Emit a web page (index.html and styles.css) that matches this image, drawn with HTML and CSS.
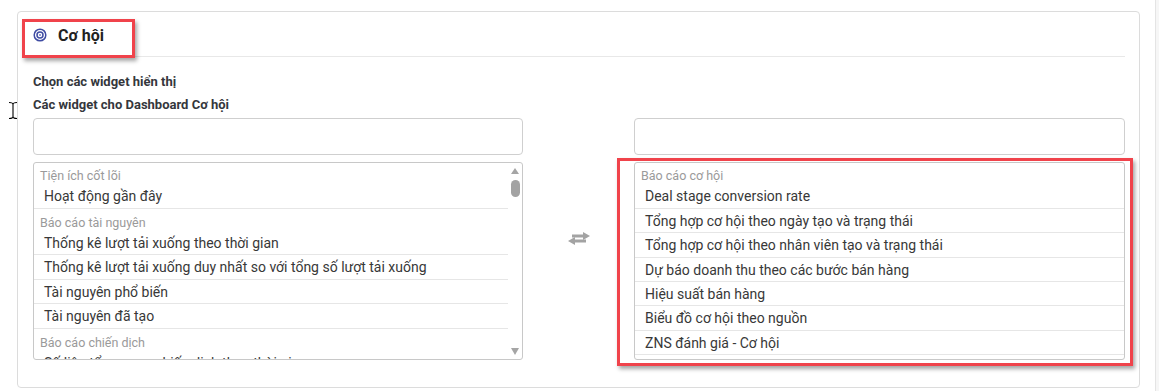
FILE: index.html
```html
<!DOCTYPE html>
<html lang="vi">
<head>
  <meta charset="UTF-8" />
  <meta name="viewport" content="width=device-width, initial-scale=1.0"/>
  <title>Dashboard Cơ hội</title>
  <link rel="stylesheet" href="styles.css">
</head>
<body>

<div class="page">
  <div class="card">
    <div class="card-head">
      <svg class="head-icon" width="14" height="14" viewBox="0 0 14 14">
        <circle cx="7" cy="7" r="5.8" fill="none" stroke="#3f4ca3" stroke-width="1.5"/>
        <circle cx="7" cy="7" r="3" fill="none" stroke="#3f4ca3" stroke-width="1.5"/>
        <circle cx="7" cy="7" r="1.1" fill="#7d88c8"/>
      </svg>
      <span class="head-title">Cơ hội</span>
    </div>

    <div class="card-body">
      <div class="lbl">Chọn các widget hiển thị</div>
      <div class="lbl">Các widget cho Dashboard Cơ hội</div>

      <div class="picker">
        <!-- available widgets -->
        <div class="side">
          <div class="search"></div>
          <div class="listbox">
            <div class="items">
              <div class="grp">Tiện ích cốt lõi</div>
              <div class="item">Hoạt động gần đây</div>
              <div class="grp">Báo cáo tài nguyên</div>
              <div class="item">Thống kê lượt tải xuống theo thời gian</div>
              <div class="item">Thống kê lượt tải xuống duy nhất so với tổng số lượt tải xuống</div>
              <div class="item">Tài nguyên phổ biến</div>
              <div class="item">Tài nguyên đã tạo</div>
              <div class="grp">Báo cáo chiến dịch</div>
              <div class="item">Số liệu tổng quan chiến dịch theo thời gian</div>
            </div>
            <div class="vscroll">
              <span class="arr-up"></span>
              <span class="thumb"></span>
              <span class="track"></span>
              <span class="arr-down"></span>
            </div>
          </div>
        </div>

        <div class="mid">
          <svg width="22" height="14" viewBox="0 0 22 14">
            <path d="M4 2.5 H15 V0 L22 4 L15 8 V5.5 H4 Z" fill="#a3a3a3"/>
            <path d="M18 7.5 H7 V5 L0 9 L7 13 V10.5 H18 Z" fill="#a3a3a3"/>
          </svg>
        </div>

        <!-- selected widgets -->
        <div class="side">
          <div class="search"></div>
          <div class="listbox">
            <div class="items">
              <div class="grp">Báo cáo cơ hội</div>
              <div class="item">Deal stage conversion rate</div>
              <div class="item">Tổng hợp cơ hội theo ngày tạo và trạng thái</div>
              <div class="item">Tổng hợp cơ hội theo nhân viên tạo và trạng thái</div>
              <div class="item">Dự báo doanh thu theo các bước bán hàng</div>
              <div class="item">Hiệu suất bán hàng</div>
              <div class="item">Biểu đồ cơ hội theo nguồn</div>
              <div class="item">ZNS đánh giá - Cơ hội</div>
            </div>
          </div>
        </div>
      </div>
    </div>
  </div>

  <!-- annotation boxes -->
  <div class="mark mark-head"></div>
  <div class="mark mark-list"></div>

  <svg class="cursor" width="10" height="19" viewBox="0 0 10 19">
    <path d="M1 1.5 Q5 1.5 5 3.5 Q5 1.5 9 1.5 M5 3.5 V15.5 M1 17.5 Q5 17.5 5 15.5 Q5 17.5 9 17.5" fill="none" stroke="#fff" stroke-width="2.6"/>
    <path d="M1 1.5 Q5 1.5 5 3.5 Q5 1.5 9 1.5 M5 3.5 V15.5 M1 17.5 Q5 17.5 5 15.5 Q5 17.5 9 17.5" fill="none" stroke="#000" stroke-width="1.1"/>
  </svg>
</div>

</body>
</html>
```

FILE: styles.css
```css
* {
  box-sizing: border-box;
}
body {
  margin: 0;
  background: #f6f6f6;
  font-family: Roboto, "Noto Sans", Arial, sans-serif;
  color: #333;
}
.page {
  position: relative;
  width: 1156px;
  height: 391px;
  background: #fff;
  border-right: 1px solid #e4e4e4;
  padding: 11px 0 0 17px;
  overflow: hidden;
}
.card {
  width: 1123px;
  height: 377px;
  border: 1px solid #dcdcdc;
  border-radius: 4px;
}
.card-head {
  display: flex;
  align-items: center;
  gap: 11px;
  height: 45px;
  padding-top: 2px;
  margin: 0 14px 0 15px;
  border-bottom: 1px solid #e8e8e8;
}
.head-icon {
  display: block;
}
.head-title {
  font-size: 16px;
  font-weight: 700;
  color: #222;
}
.card-body {
  padding: 17px 14px 0 15px;
}
.lbl {
  font-size: 13px;
  font-weight: 700;
  line-height: 16px;
  color: #34373c;
  margin-bottom: 7px;
}
.lbl + .lbl {
  margin-bottom: 5px;
}
.picker {
  display: grid;
  grid-template-columns: 490px 111px 491px;
}
.side {
  display: flex;
  flex-direction: column;
  gap: 7px;
}
.search {
  height: 37px;
  border: 1px solid #cfcfcf;
  border-radius: 4px;
  background: #fff;
}
.listbox {
  height: 198px;
  border: 1px solid #c8c8c8;
  border-radius: 3px;
  display: flex;
  overflow: hidden;
}
.items {
  flex: 1;
  min-width: 0;
  overflow: hidden;
}
.grp {
  font-size: 12.5px;
  line-height: 14px;
  color: #9a9a9a;
  padding: 7px 6px 1.3px;
}
.grp:first-child {
  padding-top: 6px;
}
.item {
  font-size: 14px;
  line-height: 17.4px;
  padding: 4px 10px 2px;
  border-bottom: 1px solid #e6e6e6;
  color: #383838;
  white-space: nowrap;
}
.vscroll {
  width: 14px;
  display: flex;
  flex-direction: column;
  align-items: center;
  padding: 5px 0 4px;
}
.arr-up {
  width: 0;
  height: 0;
  border-left: 4.5px solid transparent;
  border-right: 4.5px solid transparent;
  border-bottom: 6px solid #a5a5a5;
}
.thumb {
  width: 9px;
  height: 17px;
  margin-top: 6px;
  border-radius: 5px;
  background: #a3a3a3;
}
.track {
  flex: 1;
}
.arr-down {
  width: 0;
  height: 0;
  border-left: 4.5px solid transparent;
  border-right: 4.5px solid transparent;
  border-top: 7px solid #a5a5a5;
}
.mid {
  display: flex;
  align-items: center;
  justify-content: center;
}
.mark {
  position: absolute;
  border: 3px solid #f0434b;
  box-shadow: 2px 3px 4px rgba(0, 0, 0, 0.35);
}
.mark-head {
  left: 22px;
  top: 19px;
  width: 113px;
  height: 39px;
}
.mark-list {
  left: 617px;
  top: 158px;
  width: 516px;
  height: 208px;
}
.cursor {
  position: absolute;
  left: 8px;
  top: 101px;
}
```
